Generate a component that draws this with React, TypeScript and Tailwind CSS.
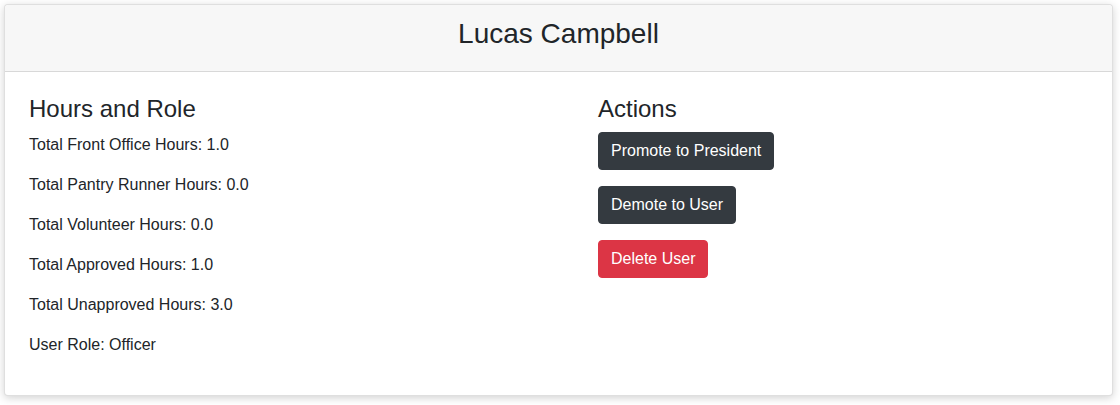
const HOURS = [
  "Total Front Office Hours: 1.0",
  "Total Pantry Runner Hours: 0.0",
  "Total Volunteer Hours: 0.0",
  "Total Approved Hours: 1.0",
  "Total Unapproved Hours: 3.0",
  "User Role: Officer",
];

export default function App() {
  return (
    <div
      className="min-h-screen bg-white pt-1 pl-1 text-[#212529]"
      style={{ fontFamily: '"Liberation Sans", Arial, sans-serif' }}
    >
      <div className="w-[1109px] rounded border border-black/[0.125] bg-white shadow-[0_2px_8px_rgba(0,0,0,0.18)]">
        {/* Header */}
        <div className="rounded-t bg-[#f7f7f7] border-b border-black/[0.125] px-5 pt-3 pb-3">
          <h3 className="text-[28px] leading-[1.2] mb-2 text-center">Lucas Campbell</h3>
        </div>

        {/* Body */}
        <div className="grid grid-cols-[569px_1fr] pl-6 pr-5 pt-[23px] pb-[22px]">
          <div>
            <h4 className="text-2xl leading-[1.2] mb-2.5">Hours and Role</h4>
            {HOURS.map((line) => (
              <p key={line} className="text-base leading-6 mb-4">
                {line}
              </p>
            ))}
          </div>

          <div>
            <h4 className="text-2xl leading-[1.2] mb-[9px]">Actions</h4>
            <div className="flex flex-col items-start gap-4">
              <button className="rounded border border-[#343a40] bg-[#343a40] px-3 py-1.5 text-base leading-6 text-white">
                Promote to President
              </button>
              <button className="rounded border border-[#343a40] bg-[#343a40] px-3 py-1.5 text-base leading-6 text-white">
                Demote to User
              </button>
              <button className="rounded border border-[#dc3545] bg-[#dc3545] px-3 py-1.5 text-base leading-6 text-white">
                Delete User
              </button>
            </div>
          </div>
        </div>
      </div>
    </div>
  );
}
